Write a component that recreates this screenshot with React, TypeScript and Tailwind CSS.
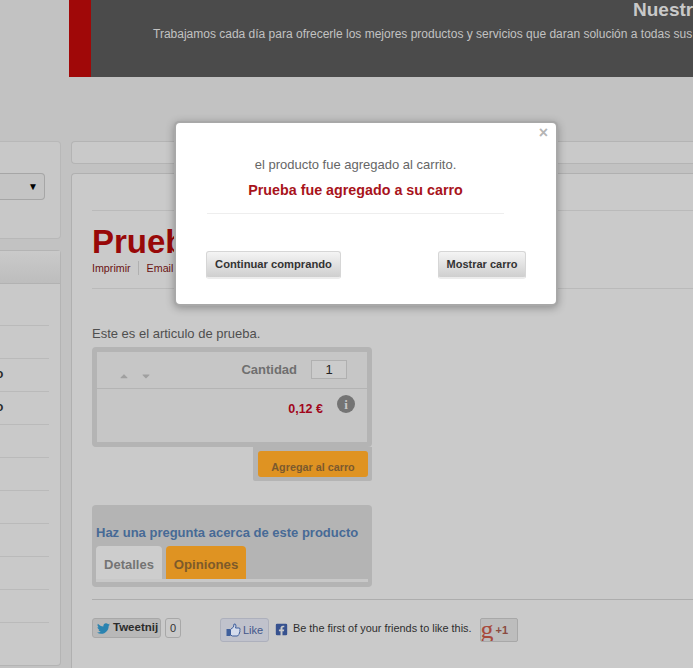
import { FaTwitter, FaFacebookSquare, FaCaretDown, FaCaretUp } from "react-icons/fa";

const sideRows = ["", "", "o", "o", "", "", "", "", "", ""];

const Sidebar = () => (
  <aside className="w-[61px] shrink-0 pt-[64px]">
    <div className="h-[98px] rounded-r-[4px] border-y border-r border-[#b8b8b8] bg-[#c8c8c8] pt-[31px]">
      <div className="flex h-[27px] w-[45px] items-center justify-end rounded-r-[4px] border-y border-r border-[#a6a6a6] bg-[#c4c4c4] pr-[6px]">
        <span className="text-[10px] leading-none text-black">▼</span>
      </div>
    </div>
    <div className="mt-[11px] h-[416px] rounded-r-[4px] border-y border-r border-[#b4b4b4] bg-[#c9c9c9]">
      <div className="h-[33px] border-b border-[#b2b2b2] bg-gradient-to-b from-[#cacaca] to-[#bdbdbd]" />
      <div className="w-[49px] pt-[9px]">
        {sideRows.map((t, i) => (
          <div
            key={i}
            className="flex h-[33px] items-center border-b border-[#bababa] text-[12px] font-bold leading-none text-[#2a2a2a]"
          >
            <span className="-ml-[4px] pb-[3px]">{t}</span>
          </div>
        ))}
      </div>
    </div>
  </aside>
);

const BuyBox = () => (
  <div className="w-[280px]">
    <div className="h-[100px] rounded-[4px] border-[5px] border-[#b4b4b4] bg-[#c6c6c6]">
      <div className="flex h-[37px] items-start border-b border-[#b4b4b4]">
        <div className="flex gap-[10px] pl-[21px] pt-[18px] text-[#a0a0a0]">
          <FaCaretUp size={12} />
          <FaCaretDown size={12} />
        </div>
        <span className="ml-auto pt-[10px] text-[13px] font-bold leading-[15px] text-[#6f6f6f]">Cantidad</span>
        <div className="ml-[14px] mr-[20px] mt-[8px] flex h-[19px] w-[36px] items-center justify-center border border-[#b0b0b0] bg-[#cbcbcb] text-[13px] text-[#222]">
          1
        </div>
      </div>
      <div className="flex items-start justify-end pr-[12px] pt-[6px]">
        <span className="pt-[7px] text-[12.5px] font-bold leading-[15px] text-[#a1061c]">0,12 €</span>
        <span className="ml-[14px] flex h-[18px] w-[18px] items-center justify-center rounded-full bg-[#747474] font-['Liberation_Serif',serif] text-[13px] font-bold leading-none text-[#c8c8c8]">
          i
        </span>
      </div>
    </div>
    <div className="ml-auto h-[34px] w-[119px] rounded-b-[2px] bg-[#b4b4b4] pl-[5px] pt-[4px]">
      <div className="flex h-[26px] w-[110px] items-center justify-center rounded-[3px] bg-[#df9322] pt-[7px] text-[10.8px] font-bold text-[#7b5a2e]">
        Agregar al carro
      </div>
    </div>
  </div>
);

const Tabs = () => (
  <div className="mt-[24px] h-[82px] w-[280px] rounded-[4px] bg-[#b4b4b4] px-[4px] pt-[20px]">
    <div className="text-[13px] font-bold leading-[15px] text-[#476a96]">Haz una pregunta acerca de este producto</div>
    <div className="mt-[6px] flex h-[36px] items-stretch gap-[4px] border-b-[3px] border-[#c8c8c8]">
      <div className="flex w-[66px] items-center justify-center rounded-t-[4px] bg-[#cdcdcd] pt-[4px] text-[13px] font-bold text-[#747474]">
        Detalles
      </div>
      <div className="flex w-[80px] items-center justify-center rounded-t-[4px] bg-[#df9322] pt-[4px] text-[13.2px] font-bold text-[#7d5a2a]">
        Opiniones
      </div>
    </div>
  </div>
);

const Social = () => (
  <div className="mt-[18px] flex items-start">
    <div className="flex h-[20px] w-[69px] items-center gap-[3px] rounded-[3px] border border-[#a8a8a8] bg-[#b8b8b8] pl-[4px] text-[11.5px] font-bold text-[#2b2b2b]">
      <FaTwitter size={13} className="shrink-0 text-[#2a83b0]" />
      Tweetnij
    </div>
    <div className="ml-[4px] flex h-[20px] w-[16px] items-center justify-center rounded-[3px] border border-[#a8a8a8] text-[11px] text-[#333]">
      0
    </div>
    <div className="ml-[39px] flex h-[24px] w-[49px] items-center justify-center gap-[2px] rounded-[3px] border border-[#adb0bc] bg-[#c0c2cc] text-[11px] text-[#42568a]">
      <svg width="15" height="14" viewBox="0 0 15 14" className="shrink-0">
        <rect x="0.5" y="6" width="4" height="7" fill="#3f5f9c" />
        <path
          d="M4.5 6.5 L7.5 4 L8 1 Q10 0.5 10 3 L9.5 5 L13.5 5 Q14.5 6 13.8 7.5 Q14.3 9 13.3 10 Q13.5 11.5 12.3 12 Q12 13 11 13 L6.5 13 L4.5 12 Z"
          fill="#d5dcec"
          stroke="#3f5f9c"
          strokeWidth="1"
        />
      </svg>
      Like
    </div>
    <FaFacebookSquare size={13} className="ml-[6px] mt-[5px] shrink-0 text-[#37528f]" />
    <span className="ml-[5px] mt-[3px] whitespace-nowrap text-[10.9px] leading-[15px] text-[#2f2f2f]">
      Be the first of your friends to like this.
    </span>
    <div className="ml-[8px] flex h-[24px] w-[38px] items-center gap-[2px] overflow-hidden rounded-[2px] border border-[#a8a8a8] bg-[#bdbdbd]">
      <span className="font-['Liberation_Serif',serif] text-[26px] leading-[18px] text-[#a84a3c]">g</span>
      <span className="text-[11px] font-bold text-[#8a4a40]">+1</span>
    </div>
  </div>
);

const Main = () => (
  <main className="ml-[10px] min-w-0 flex-1 pt-[64px]">
    <div className="h-[23px] rounded-l-[4px] border-y border-l border-[#b4b4b4] bg-[#c9c9c9]" />
    <div className="mt-[9px] h-[520px] rounded-tl-[4px] border-l border-t border-[#b0b0b0] bg-[#cacaca] pl-[20px] pt-[36px]">
      <div className="border-t border-[#bababa]" />
      <h1 className="mt-[12px] text-[33px] font-bold leading-[38px] text-[#980808]">Prueba</h1>
      <div className="flex items-center text-[10.7px] leading-[14px] text-[#6b1212]">
        <span className="border-r border-[#b0b0b0] pr-[7px]">Imprimir</span>
        <span className="pl-[8px]">Email</span>
      </div>
      <div className="mt-[13px] border-t border-[#bababa]" />
      <p className="mt-[37px] text-[13px] leading-[15px] text-[#4f4f4f]">Este es el articulo de prueba.</p>
      <div className="mt-[6px]">
        <BuyBox />
      </div>
      <Tabs />
      <div className="mt-[12px] border-t border-[#adadad]" />
      <Social />
    </div>
  </main>
);

const Modal = () => (
  <div className="absolute left-[174px] top-[121px] h-[185px] w-[384px] rounded-[5px] bg-[#a8a8a8] p-[2px] shadow-[0_2px_8px_rgba(0,0,0,0.3)]">
    <div className="relative h-full rounded-[4px] bg-white px-[31px] pt-[34px]">
      <span className="absolute right-[8px] top-[2px] text-[16px] font-bold leading-[16px] text-[#b5b5b5]">×</span>
      <div className="w-[297px] border-b border-[#eeeeee] pb-[15px] text-center">
        <div className="text-[13px] leading-[15px] text-[#666666]">el producto fue agregado al carrito.</div>
        <div className="mt-[10px] text-[14.3px] font-bold leading-[16px] text-[#a8131b]">Prueba fue agregado a su carro</div>
      </div>
      <div className="-ml-[1px] mt-[37px] flex w-[320px] justify-between">
        <button className="h-[28px] w-[135px] rounded-[3px] border border-[#d6d6d6] border-b-2 border-b-[#ececec] bg-gradient-to-b from-[#f4f4f4] to-[#cfcfcf] text-[11.2px] font-bold text-[#333333]">
          Continuar comprando
        </button>
        <button className="h-[28px] w-[88px] rounded-[3px] border border-[#d6d6d6] border-b-2 border-b-[#ececec] bg-gradient-to-b from-[#f4f4f4] to-[#cfcfcf] text-[11px] font-bold text-[#333333]">
          Mostrar carro
        </button>
      </div>
    </div>
  </div>
);

export default function App() {
  return (
    <div className="relative h-[668px] w-[693px] overflow-hidden bg-[#c2c2c2] font-['Liberation_Sans',Arial,sans-serif]">
      <header className="ml-[69px] flex h-[77px] bg-[#4b4b4b]">
        <div className="w-[22px] shrink-0 bg-[#a00808]" />
        <div className="min-w-0 flex-1 overflow-hidden pl-[62px]">
          <div className="whitespace-nowrap pl-[480px] text-[19px] font-bold leading-[20px] text-[#c9c9c9]">Nuestros</div>
          <div className="mt-[7px] whitespace-nowrap text-[12px] leading-[14px] text-[#c2c2c2]">
            Trabajamos cada día para ofrecerle los mejores productos y servicios que daran solución a todas sus necesidades
          </div>
        </div>
      </header>
      <div className="flex">
        <Sidebar />
        <Main />
      </div>
      <Modal />
    </div>
  );
}
